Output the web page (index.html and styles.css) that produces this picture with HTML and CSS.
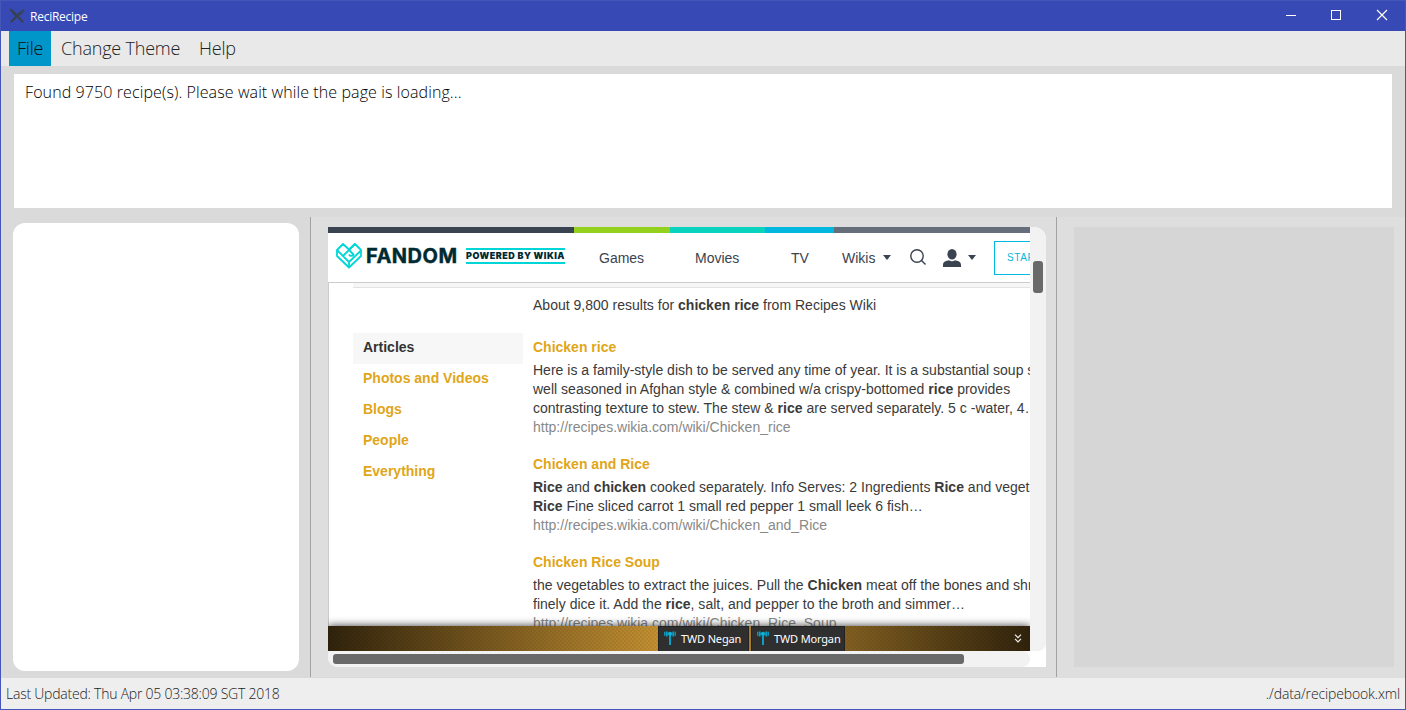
FILE: index.html
```html
<!DOCTYPE html>
<html lang="en">
<head>
<meta charset="utf-8">
<title>ReciRecipe</title>
<link rel="stylesheet" href="styles.css">
</head>
<body>
<div class="window">
  <header class="titlebar">
    <svg class="app-icon" width="16" height="16" viewBox="0 0 16 16"><path d="M2.5 13.5 10.5 5.5M5.5 5.5l8 8" stroke="#37424f" stroke-width="2.4" stroke-linecap="round"/><path d="M0.5 1.5 2 .5l5.5 5-2.5 2.2z" fill="#37424f"/><path d="M9.5 5.5 14 1M10.500 6 15 2M11 7l4.500-4" stroke="#37424f" stroke-width="1"/></svg>
    <span class="app-name">ReciRecipe</span>
    <div class="controls">
      <svg width="46" height="30" viewBox="0 0 46 30"><path d="M17 15.500h10" stroke="#fff"/></svg>
      <svg width="46" height="30" viewBox="0 0 46 30"><rect x="16.500" y="10.500" width="9" height="9" fill="none" stroke="#fff"/></svg>
      <svg width="46" height="30" viewBox="0 0 46 30"><path d="m16 10 10 10m0-10L16 20" stroke="#fff" stroke-width="1.200"/></svg>
    </div>
  </header>
  <nav class="menubar">
    <span class="menu menu-active">File</span>
    <span class="menu menu-theme">Change Theme</span>
    <span class="menu menu-help">Help</span>
  </nav>
  <section class="result-area"><div class="result-box"><span class="result-text">Found 9750 recipe(s). Please wait while the page is loading...</span></div></section>
  <main class="panes">
    <section class="pane-left"><div class="recipe-list"></div></section>
    <section class="pane-browser">
      <div class="browser">
        <div class="page">
          <div class="stripe"><i class="s-dark"></i><i class="s-green"></i><i class="s-teal"></i><i class="s-blue"></i><i class="s-grey"></i></div>
          <div class="site-nav">
            <svg class="heart" width="26" height="26" viewBox="0 0 26 26" fill="none" stroke="#00d6d6" stroke-width="1.800" stroke-linejoin="round"><path d="M1 7 7 1 13 6.500 19 1 25 7v6L13 24.500 1 13z"/><path d="M1 7l12 12L25 7.500M7 13 19 1M13 7l4.500 4.500a2.500 2.500 0 0 1-4.500 0M13 19v5"/></svg>
            <span class="fandom">FANDOM</span>
            <span class="powered"><span class="powered-text">POWERED BY WIKIA</span></span>
            <span class="nav-link n-games">Games</span>
            <span class="nav-link n-movies">Movies</span>
            <span class="nav-link n-tv">TV</span>
            <span class="nav-link n-wikis">Wikis</span>
            <svg class="caret c1" width="8" height="5" viewBox="0 0 8 5"><path d="M0 0h8L4 5z"/></svg>
            <svg class="search" width="16" height="16" viewBox="0 0 16 16" fill="none" stroke="#3a4350" stroke-width="1.400"><circle cx="7" cy="7" r="6.200"/><path d="m11.500 11.500 4 4"/></svg>
            <svg class="user" width="18" height="18" viewBox="0 0 18 18" fill="#3a4350"><ellipse cx="9" cy="5.200" rx="4.600" ry="5.200"/><path d="M0 18v-2c0-3.500 3.500-4.500 6-4.800 1.800 1.500 4.200 1.500 6 0 2.500.3 6 1.300 6 4.800v2z"/></svg>
            <svg class="caret c2" width="8" height="5" viewBox="0 0 8 5"><path d="M0 0h8L4 5z"/></svg>
            <span class="start-btn">START A WIKI</span>
          </div>
          <div class="content">
            <div class="strip"></div>
            <div class="columns">
              <aside class="filters">
                <span class="filter filter-on">Articles</span>
                <span class="filter">Photos and Videos</span>
                <span class="filter">Blogs</span>
                <span class="filter">People</span>
                <span class="filter">Everything</span>
              </aside>
              <div class="results">
                <p class="count">About 9,800 results for <b>chicken rice</b> from Recipes Wiki</p>
                <article class="hit"><h2>Chicken rice</h2><p>Here is a family-style dish to be served any time of year. It is a substantial soup stew,<br>well seasoned in Afghan style &amp; combined w/a crispy-bottomed <b>rice</b> provides<br>contrasting texture to stew. The stew &amp; <b>rice</b> are served separately. 5 c -water, 4…</p><span class="url">http://recipes.wikia.com/wiki/Chicken_rice</span></article>
                <article class="hit"><h2>Chicken and Rice</h2><p><b>Rice</b> and <b>chicken</b> cooked separately. Info Serves: 2 Ingredients <b>Rice</b> and vegetables<br><b>Rice</b> Fine sliced carrot 1 small red pepper 1 small leek 6 fish…</p><span class="url">http://recipes.wikia.com/wiki/Chicken_and_Rice</span></article>
                <article class="hit"><h2>Chicken Rice Soup</h2><p>the vegetables to extract the juices. Pull the <b>Chicken</b> meat off the bones and shred or<br>finely dice it. Add the <b>rice</b>, salt, and pepper to the broth and simmer…</p><span class="url">http://recipes.wikia.com/wiki/Chicken_Rice_Soup</span></article>
              </div>
            </div>
          </div>
          <div class="toolbar">
            <span class="tab t-negan"><svg width="12" height="14" viewBox="0 0 12 14"><path d="M6 3v11" stroke="#0a9fc4" stroke-width="2"/><g fill="none" stroke="#0a9fc4"><path d="M2.700.5v5M9.300.5v5" stroke-width="1.900"/><path d="M.7.800v4M11.300.800v4" stroke-width="1.200"/><path d="M3 3h6"/></g><circle cx="6" cy="2.800" r="2" fill="#0ab4dc"/></svg>TWD Negan</span>
            <span class="tab t-morgan"><svg width="12" height="14" viewBox="0 0 12 14"><path d="M6 3v11" stroke="#0a9fc4" stroke-width="2"/><g fill="none" stroke="#0a9fc4"><path d="M2.700.5v5M9.300.5v5" stroke-width="1.900"/><path d="M.7.800v4M11.300.800v4" stroke-width="1.200"/><path d="M3 3h6"/></g><circle cx="6" cy="2.800" r="2" fill="#0ab4dc"/></svg>TWD Morgan</span>
            <svg class="collapse" width="8" height="9" viewBox="0 0 8 9" fill="none" stroke="#eee" stroke-width="1.200"><path d="m1 .7 3 3 3-3M1 4.900l3 3 3-3"/></svg>
          </div>
        </div>
        <div class="vscroll"><div class="vthumb"></div></div>
        <div class="hscroll"><div class="hthumb"></div></div>
      </div>
    </section>
    <section class="pane-right"><div class="details"></div></section>
  </main>
  <footer class="statusbar"><span class="updated">Last Updated: Thu Apr 05 03:38:09 SGT 2018</span><span class="path">./data/recipebook.xml</span></footer>
</div>
</body>
</html>
```
FILE: styles.css
```css
* { box-sizing: border-box; }
body { margin: 0; }
.window {
  width: 1406px; height: 710px; border: 1px solid #4556b8; background: #dadada;
  display: flex; flex-direction: column; overflow: hidden;
  font-family: "Open Sans", "Noto Sans", sans-serif; color: #222;
}
.titlebar { height: 30px; flex: none; background: #3649b5; display: flex; align-items: center; padding-left: 8px; color: #fff; }
.app-name { font-size: 12px; margin-left: 5px; letter-spacing: -.25px; }
.controls { display: flex; margin-left: auto; margin-right: -2px; height: 30px; align-items: flex-start; }
.controls svg { margin-top: -1px; }
.menubar { height: 35px; flex: none; background: #e9e9e9; display: flex; padding-left: 8px; font-size: 18px; font-weight: 300; line-height: 35px; white-space: nowrap; letter-spacing: -.2px; }
.menu-active { width: 42px; padding-left: 8px; background: #0096c9; color: #111; }
.menu-theme { width: 148px; padding-left: 10px; }
.result-area { height: 151px; flex: none; padding: 8px 13px 0; }
.result-box { height: 134px; background: #fff; padding: 6px 11px; }
.result-text { display: block; font-size: 16px; line-height: 24px; font-weight: 300; color: #000; white-space: nowrap; letter-spacing: .1px; }
.panes { height: 461px; flex: none; display: flex; }
.pane-left { width: 309px; padding: 6px 0 0 12px; }
.recipe-list { width: 286px; height: 448px; border-radius: 12px; background: #fff; }
.pane-browser { width: 747px; height: 460px; border: solid #a2a2a2; border-width: 0 1px; padding: 10px 0 0 17px; background: #dedede; }
.browser { display: grid; grid-template: 424px 16px / 702px 16px; width: 718px; background: #fff; border-radius: 0 12px 0 10px; overflow: hidden; }
.page { position: relative; overflow: hidden; background: #fff; font: 14px/19px "Liberation Sans", Arial, sans-serif; color: #3a3a3a; }
.stripe { display: flex; height: 6px; }
.s-dark { width: 246px; background: #3a4350; }
.s-green { width: 96px; background: #94d11f; }
.s-teal { width: 95px; background: #09d3bf; }
.s-blue { width: 69px; background: #00b7e0; }
.s-grey { flex: 1; background: #656e7a; }
.site-nav { height: 50px; display: flex; align-items: center; padding-left: 8px; border-bottom: 1px solid #ccc; color: #3a4350; white-space: nowrap; overflow: hidden; }
.site-nav > * { flex: none; }
.heart { margin-top: -4px; }
.fandom { width: 100px; margin: -4px 0 0 4px; font: 700 20px/24px Inter, sans-serif; color: #002a32; letter-spacing: .5px; -webkit-text-stroke: .4px #002a32; }
.powered { width: 99px; height: 16px; margin-top: -3px; border: solid #00d6d6; border-width: 2px 0; display: flex; align-items: center; }
.powered-text { font: 900 9px/12px Inter, sans-serif; color: #002a32; letter-spacing: .48px; }
.nav-link { margin-top: 1px; }
.n-games { width: 96px; margin-left: 34px; }
.n-movies { width: 96px; }
.n-tv { width: 51px; }
.n-wikis { width: 41px; }
.caret { fill: #3a4350; }
.search { margin: -1px 0 0 19px; }
.user { margin: 0 0 0 17px; }
.c2 { margin-left: 7px; }
.start-btn { width: 110px; height: 34px; margin-left: 18px; border: 1px solid #00b7e0; padding-left: 12px; font-size: 10px; line-height: 32px; color: #00b7e0; letter-spacing: .6px; }
.content { height: 368px; border-left: 1px solid #ccc; padding-left: 24px; }
.strip { height: 5px; background: #f6f6f6; border-bottom: 1px solid #e2e2e2; }
.columns { display: flex; white-space: nowrap; }
.filters { width: 170px; flex: none; padding-top: 45px; font-weight: 700; }
.filter { display: block; height: 31px; padding: 5px 10px; color: #e0a618; }
.filter-on { background: #f7f7f7; color: #333; }
.results { margin-left: 10px; padding-top: 8px; }
.results p, .results h2 { margin: 0; font-size: 14px; line-height: 19px; }
.results p { letter-spacing: .012px; }
.results .count { margin-bottom: 23px; }
.results h2 { color: #e0a618; margin-bottom: 4px; }
.hit { margin-bottom: 18px; }
.url { display: block; color: #888; }
.toolbar { position: absolute; left: 0; bottom: 0; width: 702px; height: 25px; display: flex; align-items: center; padding-left: 330px; background: repeating-conic-gradient(rgba(0,0,0,.06) 0 25%, transparent 0 50%) 0 0/4px 4px, linear-gradient(90deg, #30230c, #cc9634 50%, #30230c); box-shadow: 0 0 8px rgba(0,0,0,.8); }
.tab { height: 25px; display: flex; align-items: center; gap: 5px; padding-left: 5px; background: #2f2f2f; border: 1px solid #222; border-bottom: 0; color: #fff; font: 11px/20px "Noto Sans", "Open Sans", sans-serif; white-space: nowrap; letter-spacing: -.15px; }
.tab svg { margin-top: -3px; }
.t-negan { width: 91px; margin-right: 2px; }
.t-morgan { width: 94px; }
.collapse { margin-left: 169px; }
.vscroll { background: #f2f2f2; border-radius: 0 12px 8px 0; padding: 34px 3px 0; }
.vthumb { width: 10px; height: 32px; border-radius: 3px; background: #696969; }
.hscroll { background: #f2f2f2; border-radius: 0 9px 9px 0; padding: 3px 0 0 5px; }
.hthumb { width: 631px; height: 10px; border-radius: 3px; background: #696969; }
.pane-right { flex: 1; padding: 10px 0 0 17px; background: #dedede; }
.details { width: 320px; height: 440px; background: #d6d6d6; }
.statusbar { height: 31px; flex: none; background: #eee; display: flex; justify-content: space-between; padding: 0 5px; font-size: 14px; line-height: 31px; font-weight: 300; }
.updated { letter-spacing: -.23px; }
.path { letter-spacing: -.14px; }
```
